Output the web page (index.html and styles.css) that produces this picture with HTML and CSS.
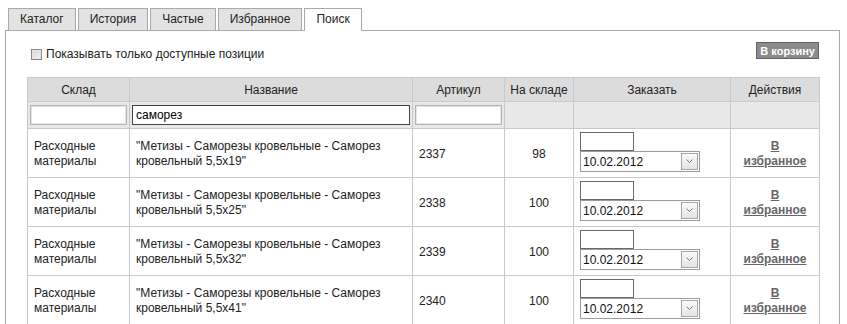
FILE: index.html
```html
<!DOCTYPE html>
<html lang="ru">
<head>
  <meta charset="UTF-8">
  <title>Поиск</title>
  <link rel="stylesheet" href="styles.css">
</head>
<body>

  <ul class="tabs">
    <li class="tab">Каталог</li>
    <li class="tab">История</li>
    <li class="tab">Частые</li>
    <li class="tab">Избранное</li>
    <li class="tab active">Поиск</li>
  </ul>

  <div class="panel">
    <div class="toolbar">
      <label class="only-available"><span class="check"></span>Показывать только доступные позиции</label>
      <button class="cart-btn">В корзину</button>
    </div>

    <table class="grid">
      <colgroup>
        <col class="c-store">
        <col class="c-name">
        <col class="c-art">
        <col class="c-qty">
        <col class="c-order">
        <col class="c-act">
      </colgroup>
      <thead>
        <tr class="head-row">
          <th>Склад</th>
          <th>Название</th>
          <th>Артикул</th>
          <th>На складе</th>
          <th>Заказать</th>
          <th>Действия</th>
        </tr>
        <tr class="filter-row">
          <td><input type="text" class="filter"></td>
          <td><input type="text" class="filter focused" value="саморез"></td>
          <td><input type="text" class="filter"></td>
          <td></td>
          <td></td>
          <td></td>
        </tr>
      </thead>
      <tbody id="rows"></tbody>
    </table>
  </div>

  <script>
    const items = [
      { art: "2337", size: "5,5x19", qty: 98 },
      { art: "2338", size: "5,5x25", qty: 100 },
      { art: "2339", size: "5,5x32", qty: 100 },
      { art: "2340", size: "5,5x41", qty: 100 }
    ];

    const tbody = document.getElementById("rows");

    items.forEach(item => {
      const tr = document.createElement("tr");
      tr.className = "item-row";
      tr.innerHTML = `
        <td>Расходные материалы</td>
        <td>"Метизы - Саморезы кровельные - Саморез кровельный ${item.size}"</td>
        <td>${item.art}</td>
        <td class="qty">${item.qty}</td>
        <td class="order">
          <input type="text" class="amount">
          <div class="date-select">
            <span class="date-value">10.02.2012</span>
            <span class="date-btn">
              <svg width="7" height="5" viewBox="0 0 7 5"><path d="M0.5 0.5 L3.5 3.5 L6.5 0.5" fill="none" stroke="#777" stroke-width="1"/></svg>
            </span>
          </div>
        </td>
        <td class="actions"><a href="#">В избранное</a></td>
      `;
      tbody.appendChild(tr);
    });
  </script>
</body>
</html>
```

FILE: styles.css
```css
body {
  font-family: "Liberation Sans", Arial, sans-serif;
  font-size: 12px;
  color: #222;
  margin: 0;
  background: white;
}

.tabs {
  list-style: none;
  margin: 8px 0 0 0;
  padding: 0 0 0 8px;
  display: flex;
  gap: 2px;
  height: 22px;
}

.tab {
  height: 21px;
  line-height: 21px;
  padding: 0 11px;
  background: #e3e3e3;
  border: 1px solid #a9a9a9;
  border-bottom: none;
}

.tab.active {
  background: white;
  height: 22px;
  position: relative;
  z-index: 1;
}

.panel {
  margin-left: 5px;
  width: 791px;
  border: 1px solid #a9a9a9;
  border-bottom: none;
  padding: 11px 21px 0 21px;
  height: 300px;
}

.toolbar {
  display: flex;
  justify-content: space-between;
  align-items: flex-start;
  height: 35px;
}

.only-available {
  display: flex;
  align-items: center;
  gap: 4px;
  padding: 5px 0 0 4px;
  line-height: 15px;
}

.check {
  width: 9px;
  height: 9px;
  border: 1px solid #8a8a8a;
  background: linear-gradient(135deg, #d6d6d6, #f4f4f4);
  box-shadow: inset 0 0 0 1px #e6e6e6;
}

.cart-btn {
  margin: 0 -1px 0 0;
  height: 17px;
  padding: 0 3px;
  font-family: "Liberation Sans", Arial, sans-serif;
  font-size: 11px;
  font-weight: bold;
  color: white;
  background: #8b8b8b;
  border: 1px solid #636363;
  line-height: 14px;
}

.grid {
  border-collapse: collapse;
  table-layout: fixed;
  width: 792px;
}

.c-store { width: 102px; }
.c-name { width: 283px; }
.c-art { width: 92px; }
.c-qty { width: 69px; }
.c-order { width: 157px; }
.c-act { width: 89px; }

.grid th,
.grid td {
  border: 1px solid #c9c9c9;
}

.head-row th {
  background: #dcdcdc;
  font-weight: normal;
  height: 23px;
  padding: 0;
}

.filter-row td {
  background: #e8e8e8;
  height: 26px;
  padding: 0 2px;
}

.filter {
  display: block;
  box-sizing: border-box;
  width: 100%;
  height: 20px;
  border: 1px solid #b4b4b4;
  box-shadow: inset 0 0 0 1px #e6e6e6;
  font-family: "Liberation Sans", Arial, sans-serif;
  font-size: 12px;
  padding: 0 3px;
  outline: none;
}

.filter.focused {
  border-color: #444;
  box-shadow: none;
}

.item-row td {
  height: 46px;
  padding: 2px 6px 0 6px;
  line-height: 15px;
  vertical-align: middle;
}

.item-row td.qty {
  text-align: center;
}

.item-row td.order {
  height: 45px;
  padding: 3px 0 0 6px;
  vertical-align: top;
}

.amount {
  display: block;
  box-sizing: border-box;
  width: 54px;
  height: 19px;
  border: 1px solid #6a6a6a;
  padding: 0;
  margin: 0;
}

.date-select {
  box-sizing: border-box;
  width: 120px;
  height: 21px;
  border: 1px solid #9c9c9c;
  display: flex;
  align-items: center;
  justify-content: space-between;
  padding: 0 1px 0 2px;
  font-size: 12px;
}

.date-value {
  padding-top: 2px;
  color: #111;
}

.date-btn {
  width: 15px;
  height: 15px;
  border: 1px solid #a6a6a6;
  background: linear-gradient(#fafafa, #e4e4e4);
  display: flex;
  align-items: center;
  justify-content: center;
}

.item-row td.actions {
  text-align: center;
  padding: 2px 10px 0 10px;
}

.actions a {
  color: #666;
  font-weight: bold;
  text-decoration: underline;
}
```
